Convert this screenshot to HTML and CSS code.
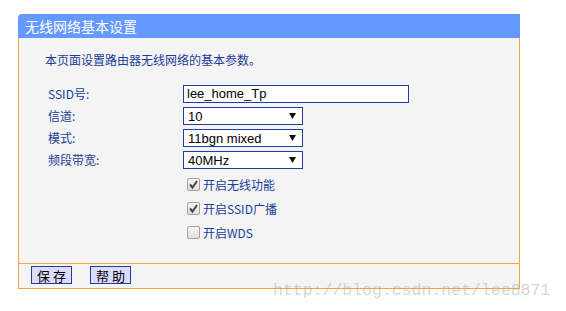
FILE: index.html
```html
<!DOCTYPE html>
<html lang="zh-CN">
<head>
<meta charset="utf-8">
<title>无线网络基本设置</title>
<link rel="stylesheet" href="styles.css">
</head>
<body>
<div class="panel">
  <div class="hd">无线网络基本设置</div>
  <div class="bd">
    <p class="desc">本页面设置路由器无线网络的基本参数。</p>
    <div class="form">
      <div class="lbl">SSID号:</div>
      <div class="ctl"><div class="input">lee_home_Tp</div></div>
      <div class="lbl">信道:</div>
      <div class="ctl"><div class="select"><span>10</span><svg width="7" height="6" viewBox="0 0 7 6"><polygon points="0,0 7,0 3.5,6" fill="#111"/></svg></div></div>
      <div class="lbl">模式:</div>
      <div class="ctl"><div class="select"><span>11bgn mixed</span><svg width="7" height="6" viewBox="0 0 7 6"><polygon points="0,0 7,0 3.5,6" fill="#111"/></svg></div></div>
      <div class="lbl">频段带宽:</div>
      <div class="ctl"><div class="select"><span>40MHz</span><svg width="7" height="6" viewBox="0 0 7 6"><polygon points="0,0 7,0 3.5,6" fill="#111"/></svg></div></div>
    </div>
    <div class="checks">
      <div class="chk"><span class="cb"><svg width="11" height="11" viewBox="0 0 11 11"><path d="M2 5.5 L4.5 8.5 L9 2" fill="none" stroke="#444" stroke-width="2"/></svg></span><span>开启无线功能</span></div>
      <div class="chk"><span class="cb"><svg width="11" height="11" viewBox="0 0 11 11"><path d="M2 5.5 L4.5 8.5 L9 2" fill="none" stroke="#444" stroke-width="2"/></svg></span><span>开启SSID广播</span></div>
      <div class="chk"><span class="cb"></span><span>开启WDS</span></div>
    </div>
  </div>
  <div class="ft">
    <button class="btn">保 存</button>
    <button class="btn">帮 助</button>
  </div>
</div>
<div class="wm">http://blog.csdn.net/lee8871</div>
</body>
</html>
```
FILE: styles.css
```css
html, body {
  margin: 0;
  padding: 0;
  background: #fff;
}
body {
  position: relative;
  width: 566px;
  height: 311px;
  overflow: hidden;
  font-family: "Noto Sans CJK SC", "Liberation Sans", sans-serif;
}
.panel {
  margin: 14px 0 0 18px;
  width: 502px;
}
.hd {
  height: 24px;
  line-height: 24px;
  background: #6699ff;
  border-top-left-radius: 4px;
  color: #fff;
  font-size: 14px;
  padding-left: 7px;
}
.bd {
  height: 225px;
  box-sizing: border-box;
  background: #f4f4f4;
  border-left: 1px solid #f7a33f;
  border-right: 1px solid #f7a33f;
  padding-top: 14px;
}
.desc {
  margin: 0 0 0 26px;
  font-size: 12px;
  line-height: 16px;
  color: #1b3d99;
}
.form {
  display: grid;
  grid-template-columns: 135px 1fr;
  grid-auto-rows: 18px;
  row-gap: 4px;
  margin: 17px 0 0 29px;
}
.lbl {
  font-size: 12px;
  line-height: 18px;
  color: #1b3d99;
}
.ctl {
  display: flex;
  align-items: center;
}
.input {
  width: 226px;
  height: 18px;
  box-sizing: border-box;
  border: 1px solid #1e3fa0;
  background: #fff;
  font-family: "Liberation Sans", sans-serif;
  font-size: 13px;
  line-height: 16px;
  padding-left: 3px;
  color: #000;
}
.select {
  width: 120px;
  height: 18px;
  box-sizing: border-box;
  border: 1px solid #1e3fa0;
  background: #fff;
  display: flex;
  align-items: center;
  justify-content: space-between;
  padding: 0 6px 0 4px;
  font-family: "Liberation Sans", sans-serif;
  font-size: 13px;
  color: #000;
}
.checks {
  margin: 3px 0 0 168px;
  display: flex;
  flex-direction: column;
}
.chk {
  height: 24px;
  display: flex;
  align-items: center;
  gap: 3px;
  font-size: 12px;
  color: #1b3d99;
}
.cb {
  width: 13px;
  height: 13px;
  box-sizing: border-box;
  border: 1px solid #a0a0a0;
  border-radius: 2px;
  background: linear-gradient(#f6f6f6, #dedede);
  display: flex;
  align-items: center;
  justify-content: center;
}
.ft {
  height: 26px;
  box-sizing: border-box;
  background: #f4f4f4;
  border: 1px solid #f7a33f;
  display: flex;
  align-items: flex-start;
  gap: 18px;
  padding: 2px 0 0 12px;
}
.btn {
  width: 41px;
  height: 18px;
  margin: 0;
  padding: 0;
  box-sizing: border-box;
  border: 1px solid #1e3fa0;
  background: #dcdcff;
  font-family: "Noto Sans CJK SC", sans-serif;
  font-size: 13px;
  line-height: 15px;
  color: #000;
}
.wm {
  position: absolute;
  left: 273px;
  top: 281px;
  font-family: "Liberation Mono", monospace;
  font-size: 16.5px;
  line-height: 20px;
  color: rgba(160, 160, 160, 0.45);
  white-space: nowrap;
}
```
